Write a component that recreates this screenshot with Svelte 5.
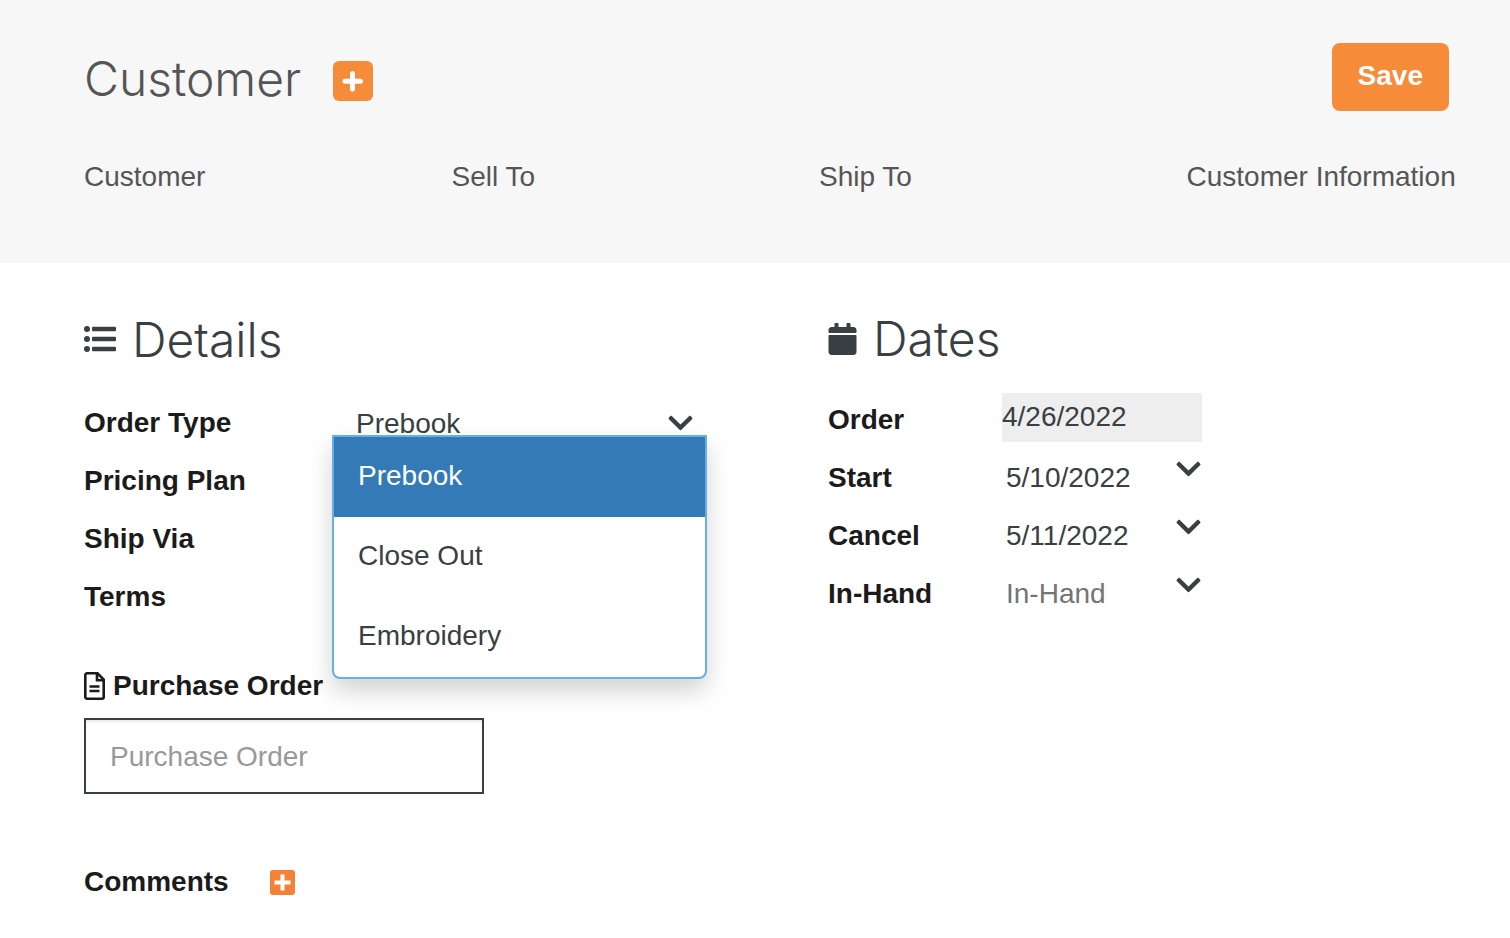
<script lang="ts">
  const columns = ['Customer', 'Sell To', 'Ship To', 'Customer Information']
  const orderTypes = ['Prebook', 'Close Out', 'Embroidery']

  let orderType = $state('Prebook')
  let menuOpen = $state(true)
  let purchaseOrder = $state('')
  let dates = $state([
    { id: 'start', label: 'Start', value: '5/10/2022' },
    { id: 'cancel', label: 'Cancel', value: '5/11/2022' },
    { id: 'in-hand', label: 'In-Hand', value: '' },
  ])

  function pick(type: string) {
    orderType = type
    menuOpen = false
  }

  function toggleMenu(e: MouseEvent) {
    e.preventDefault()
    menuOpen = !menuOpen
  }
</script>

{#snippet chevron()}
  <svg class="chevron" viewBox="0 0 448 512" aria-hidden="true">
    <path d="M207.029 381.476L12.686 187.132c-9.373-9.373-9.373-24.569 0-33.941l22.667-22.667c9.357-9.357 24.522-9.375 33.901-.04L224 284.505l154.745-154.021c9.379-9.335 24.544-9.317 33.901.04l22.667 22.667c9.373 9.373 9.373 24.569 0 33.941L240.971 381.476c-9.373 9.372-24.569 9.372-33.942 0z" />
  </svg>
{/snippet}

<header>
  <div class="title-row">
    <h1>Customer</h1>
    <button class="add" aria-label="Add customer">
      <svg viewBox="0 0 40 40"><path d="M19.5 12.5v15.500M12 20.300h15.500" /></svg>
    </button>
    <button class="save">Save</button>
  </div>
  <div class="columns">
    {#each columns as column}
      <span>{column}</span>
    {/each}
  </div>
</header>

<main>
  <section class="details">
    <h2>
      <svg class="list-icon" viewBox="0 0 512 512" aria-hidden="true">
        {#each [80, 240, 400] as y}
          <circle cx="48" cy={y} r="48" />
          <rect x="128" y={y - 36} width="384" height="72" rx="16" />
        {/each}
      </svg>
      Details
    </h2>

    <div class="row">
      <label for="order-type">Order Type</label>
      <div class="dropdown">
        <select id="order-type" bind:value={orderType} onmousedown={toggleMenu}>
          {#each orderTypes as type}
            <option>{type}</option>
          {/each}
        </select>
        {@render chevron()}
        {#if menuOpen}
          <div class="menu">
            {#each orderTypes as type}
              <button class:active={type === orderType} onclick={() => pick(type)}>{type}</button>
            {/each}
          </div>
        {/if}
      </div>
    </div>
    <div class="row"><strong>Pricing Plan</strong></div>
    <div class="row"><strong>Ship Via</strong></div>
    <div class="row"><strong>Terms</strong></div>

    <div class="purchase-order">
      <label for="purchase-order">
        <svg class="file-icon" viewBox="0 0 21 28" aria-hidden="true">
          <path d="M3 1.3h10.500l6.200 6.200V25a1.700 1.700 0 0 1-1.700 1.700H3A1.700 1.700 0 0 1 1.300 25V3A1.700 1.700 0 0 1 3 1.300z" />
          <path d="M13 2v6.200h6.500M5.500 14.500h10M5.500 19h10" />
        </svg>
        Purchase Order
      </label>
      <input id="purchase-order" type="text" placeholder="Purchase Order" bind:value={purchaseOrder} />
    </div>

    <div class="comments">
      <strong>Comments</strong>
      <button class="add small" aria-label="Add comment">
        <svg viewBox="0 0 25 25"><path d="M12.500 6.500v12M6.500 12.500h12" /></svg>
      </button>
    </div>
  </section>

  <section class="dates">
    <h2>
      <svg class="calendar-icon" viewBox="0 0 448 512" aria-hidden="true">
        <path d="M12 192h424c6.6 0 12 5.4 12 12v260c0 26.5-21.5 48-48 48H48c-26.5 0-48-21.5-48-48V204c0-6.6 5.4-12 12-12zm436-44v-36c0-26.5-21.5-48-48-48h-48V12c0-6.6-5.4-12-12-12h-40c-6.6 0-12 5.4-12 12v52H160V12c0-6.6-5.4-12-12-12h-40c-6.6 0-12 5.4-12 12v52H48C21.5 64 0 85.5 0 112v36c0 6.6 5.4 12 12 12h424c6.6 0 12-5.4 12-12z" />
      </svg>
      Dates
    </h2>

    <div class="row">
      <label for="order-date">Order</label>
      <input id="order-date" class="readonly" type="text" value="4/26/2022" readonly />
    </div>
    {#each dates as date}
      <div class="row">
        <label for={date.id}>{date.label}</label>
        <div class="date">
          <input id={date.id} type="text" placeholder={date.label} bind:value={date.value} />
          <button aria-label="Pick {date.label} date">{@render chevron()}</button>
        </div>
      </div>
    {/each}
  </section>
</main>

<style>
  :global(body) {
    background: #fff;
    color: #393f42;
    font-family: "Helvetica Neue", "Liberation Sans", Arial, sans-serif;
    font-size: 28px;
    line-height: 32px;
  }

  button,
  input,
  select {
    box-sizing: border-box;
    margin: 0;
    padding: 0;
    border: none;
    border-radius: 0;
    outline: none;
    background: none;
    color: inherit;
    font: inherit;
  }

  button {
    cursor: pointer;
  }

  svg {
    display: block;
    flex: none;
    fill: currentColor;
  }

  h1,
  h2 {
    margin: 0;
    font-family: Inter, "Liberation Sans", sans-serif;
    font-size: 48px;
    font-weight: 300;
    line-height: 60px;
  }

  header {
    padding: 43px 0 70px 84px;
    background: #f7f7f7;
    color: #555;
  }

  .title-row {
    display: flex;
    align-items: center;
    padding-right: 61px;
  }

  h1 {
    padding-top: 4px;
  }

  .add {
    width: 40px;
    height: 40px;
    margin: 8px 0 0 32px;
    border-radius: 6px;
    background: #f68b3a;
  }

  .add path {
    fill: none;
    stroke: #fff;
    stroke-width: 5;
    stroke-linecap: round;
  }

  .add.small {
    width: 25px;
    height: 25px;
    margin: 0 0 0 41px;
    border-radius: 3px;
    background: #f38136;
  }

  .add.small path {
    stroke-linecap: square;
    stroke-width: 4;
  }

  .save {
    height: 68px;
    margin-left: auto;
    padding: 0 26px 2px;
    border-radius: 8px;
    background: #f68b3a;
    color: #fff;
    font-weight: 700;
  }

  .columns {
    display: grid;
    grid-template-columns: repeat(4, minmax(0, 1fr));
    gap: 44px;
    margin-top: 50px;
    white-space: nowrap;
  }

  main {
    display: grid;
    grid-template-columns: minmax(0, 744fr) minmax(0, 682fr);
    padding: 47px 0 40px 84px;
  }

  h2 {
    display: flex;
    align-items: center;
    gap: 16px;
  }

  .details h2 {
    margin-bottom: 24px;
  }

  .dates h2 {
    margin: -1px 0 22px;
  }

  .list-icon {
    width: 32px;
    height: 32px;
  }

  .calendar-icon {
    width: 29px;
    height: 32px;
  }

  label,
  strong {
    color: #1b1b1b;
    font-weight: 700;
  }

  .row {
    display: grid;
    grid-template-columns: 248px 375px;
    align-items: center;
    height: 58px;
  }

  .dates .row {
    grid-template-columns: 174px 200px;
  }

  .dropdown {
    position: relative;
    display: flex;
    align-items: center;
    height: 58px;
  }

  select {
    width: 100%;
    height: 58px;
    padding: 2px 0 0 24px;
    appearance: none;
  }

  .chevron {
    width: 25px;
    height: 28px;
  }

  .dropdown .chevron {
    position: absolute;
    right: 14px;
    pointer-events: none;
  }

  .menu {
    position: absolute;
    z-index: 1;
    top: 41px;
    left: 0;
    right: 0;
    overflow: hidden;
    border: 2px solid #66afe9;
    border-radius: 0 0 8px 8px;
    background: #fff;
    box-shadow: 0 12px 24px rgba(0, 0, 0, 0.175);
  }

  .menu button {
    display: block;
    width: 100%;
    height: 80px;
    padding: 0 24px 2px;
    text-align: left;
  }

  .menu .active {
    background: #337ab7;
    color: #fff;
  }

  .purchase-order {
    margin-top: 44px;
  }

  .purchase-order label {
    display: flex;
    align-items: center;
    gap: 8px;
    margin-bottom: 16px;
  }

  .file-icon {
    width: 21px;
    height: 28px;
  }

  .file-icon path {
    fill: none;
    stroke: currentColor;
    stroke-width: 2.6;
  }

  .purchase-order input {
    display: block;
    width: 400px;
    height: 76px;
    padding: 2px 24px 0;
    border: 2px solid #393f42;
    box-shadow: inset 0 2px 2px rgba(0, 0, 0, 0.075);
  }

  .purchase-order input::placeholder {
    color: #999;
  }

  .comments {
    display: flex;
    align-items: center;
    margin-top: 72px;
  }

  .readonly {
    width: 200px;
    height: 49px;
    margin-bottom: 6px;
    background: #eee;
  }

  .date {
    display: flex;
    align-items: center;
  }

  .date input {
    width: 174px;
    padding-left: 4px;
  }

  .date input::placeholder {
    color: #757575;
  }

  .date button {
    margin-bottom: 18px;
  }
</style>
